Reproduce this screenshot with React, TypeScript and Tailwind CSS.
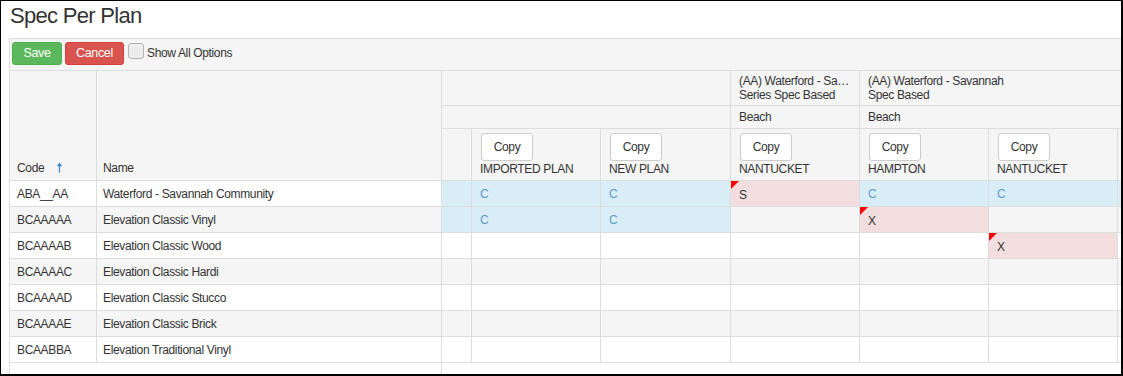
import React from "react";

type Cell = "" | "b" | "C" | "S" | "X";

const rows: { code: string; name: string; cells: Cell[] }[] = [
  { code: "ABA__AA", name: "Waterford - Savannah Community", cells: ["b", "C", "C", "S", "C", "C", "b"] },
  { code: "BCAAAAA", name: "Elevation Classic Vinyl", cells: ["b", "C", "C", "", "X", "", ""] },
  { code: "BCAAAAB", name: "Elevation Classic Wood", cells: ["", "", "", "", "", "X", ""] },
  { code: "BCAAAAC", name: "Elevation Classic Hardi", cells: ["", "", "", "", "", "", ""] },
  { code: "BCAAAAD", name: "Elevation Classic Stucco", cells: ["", "", "", "", "", "", ""] },
  { code: "BCAAAAE", name: "Elevation Classic Brick", cells: ["", "", "", "", "", "", ""] },
  { code: "BCAABBA", name: "Elevation Traditional Vinyl", cells: ["", "", "", "", "", "", ""] },
];

const plans = ["IMPORTED PLAN", "NEW PLAN", "NANTUCKET", "HAMPTON", "NANTUCKET"];

function SortArrow() {
  return (
    <svg width="7" height="11" viewBox="0 0 7 11" className="inline-block ml-[12px] align-[-1px]">
      <path d="M3.5 0.5 L0.8 4.2 H2.9 V10.5 H4.1 V4.2 H6.2 Z" fill="#3a87c8" />
    </svg>
  );
}

function CopyButton() {
  return (
    <div className="w-[52px] h-[28px] border border-[#ccc] rounded-[3px] bg-white flex items-center justify-center text-[#333]">
      Copy
    </div>
  );
}

export default function App() {
  const bd = "border-r border-b border-[#ddd]";
  return (
    <div className="w-[1123px] h-[376px] border-t border-l border-r-2 border-b-2 border-black bg-white overflow-hidden font-['Liberation_Sans',Arial,sans-serif] text-[12px] tracking-[-0.35px] text-[#333]">
      <div className="h-[37px] pl-[9px] pt-[3px]">
        <div className="text-[22px] leading-[24px] tracking-[-0.7px] text-[#333]">Spec Per Plan</div>
      </div>
      <div className="ml-[8px] border-l border-t border-[#ddd] overflow-hidden h-[337px] flex flex-col">
        <div className="h-[32px] shrink-0 bg-[#f5f5f5] border-b border-[#ddd] flex items-start pt-[3px] pl-[2px]">
          <div className="w-[50px] h-[23px] rounded-[3px] bg-[#5cb85c] border border-[#4cae4c] text-white flex items-center justify-center text-[12.5px]">
            Save
          </div>
          <div className="ml-[3px] w-[59px] h-[23px] rounded-[3px] bg-[#d9534f] border border-[#d43f3a] text-white flex items-center justify-center text-[12.5px]">
            Cancel
          </div>
          <div className="ml-[4px] mt-[1px] w-[16px] h-[16px] rounded-[3px] border border-[#b5b5b5] bg-[#ececec]" />
          <div className="ml-[3px] mt-[4px] leading-[14px]">Show All Options</div>
        </div>
        <table className="border-separate border-spacing-0 table-fixed w-[1237px] shrink-0">
          <colgroup>
            <col className="w-[87px]" />
            <col className="w-[345px]" />
            <col className="w-[30px]" />
            <col className="w-[129px]" />
            <col className="w-[130px]" />
            <col className="w-[129px]" />
            <col className="w-[129px]" />
            <col className="w-[129px]" />
            <col className="w-[129px]" />
          </colgroup>
          <thead>
            <tr className="h-[35px]">
              <th rowSpan={3} className={`${bd} bg-[#f5f5f5] font-normal text-left align-bottom pl-[7px] pb-[5px] leading-[14px]`}>
                Code
                <SortArrow />
              </th>
              <th rowSpan={3} className={`${bd} bg-[#f5f5f5] font-normal text-left align-bottom pl-[6px] pb-[5px] leading-[14px]`}>
                Name
              </th>
              <th colSpan={3} className={`${bd} bg-[#f5f5f5]`} />
              <th className={`${bd} bg-[#f5f5f5] font-normal text-left align-top px-2 pt-[3px] leading-[14px]`}>
                <div className="truncate">(AA) Waterford - Savannah</div>
                <div className="truncate">Series Spec Based</div>
              </th>
              <th colSpan={3} className={`${bd} bg-[#f5f5f5] font-normal text-left align-top px-2 pt-[3px] leading-[14px]`}>
                <div className="truncate">(AA) Waterford - Savannah</div>
                <div className="truncate">Spec Based</div>
              </th>
            </tr>
            <tr className="h-[23px]">
              <th colSpan={3} className={`${bd} bg-[#f5f5f5]`} />
              <th className={`${bd} bg-[#f5f5f5] font-normal text-left px-2 leading-[14px]`}>Beach</th>
              <th colSpan={3} className={`${bd} bg-[#f5f5f5] font-normal text-left px-2 leading-[14px]`}>Beach</th>
            </tr>
            <tr className="h-[52px]">
              <th className={`${bd} bg-[#f5f5f5]`} />
              {plans.map((p, i) => (
                <th key={i} className={`${bd} bg-[#f5f5f5] font-normal text-left align-top px-2 pt-[4px]`}>
                  <div className="ml-[1px]">
                    <CopyButton />
                  </div>
                  <div className="leading-[14px] mt-[1px] truncate">{p}</div>
                </th>
              ))}
              <th className={`${bd} bg-[#f5f5f5]`} />
            </tr>
          </thead>
          <tbody>
            {rows.map((r, ri) => {
              const rowBg = ri % 2 === 1 ? "bg-[#f5f5f5]" : "bg-white";
              return (
                <tr key={ri} className="h-[26px]">
                  <td className={`${bd} ${rowBg} pl-[7px] leading-[14px]`}>{r.code}</td>
                  <td className={`${bd} ${rowBg} pl-[6px] leading-[14px] truncate`}>{r.name}</td>
                  {r.cells.map((c, ci) => {
                    if (c === "C" || c === "b") {
                      return (
                        <td key={ci} className={`${bd} bg-[#d9edf7] px-2 text-[#5f9acb] leading-[14px]`}>
                          {c === "C" ? "C" : ""}
                        </td>
                      );
                    }
                    if (c === "S" || c === "X") {
                      return (
                        <td key={ci} className={`${bd} bg-[#f2dede] px-2 pt-[2px] leading-[14px] relative`}>
                          <span className="absolute left-0 top-0 w-0 h-0 border-t-[8px] border-r-[8px] border-t-[#ff0000] border-r-transparent" />
                          {c}
                        </td>
                      );
                    }
                    return <td key={ci} className={`${bd} ${rowBg}`} />;
                  })}
                </tr>
              );
            })}
            <tr className="h-[20px]">
              <td colSpan={2} className="border-r border-[#ddd] bg-white" />
              <td colSpan={7} className="bg-white" />
            </tr>
          </tbody>
        </table>
      </div>
    </div>
  );
}
